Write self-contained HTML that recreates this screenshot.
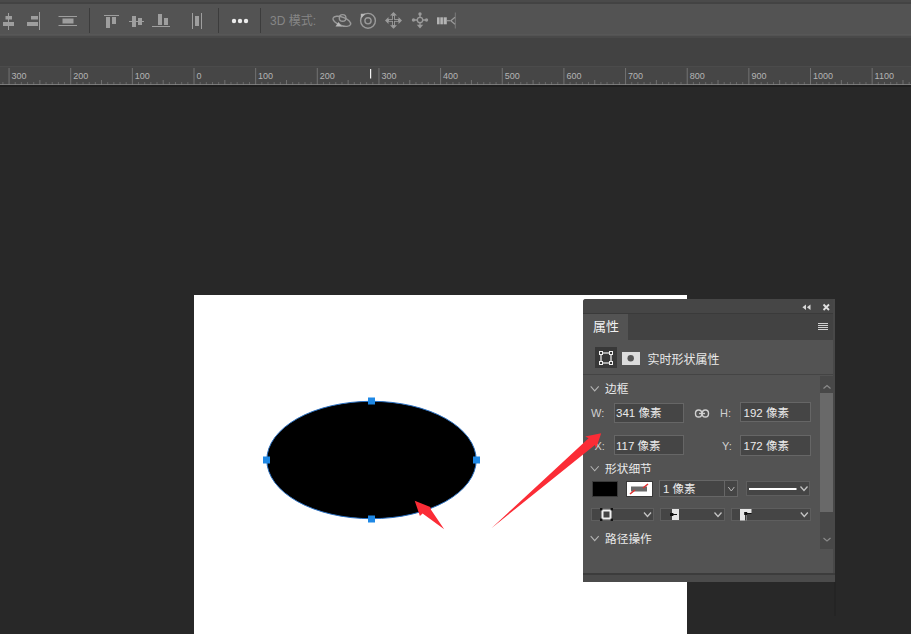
<!DOCTYPE html>
<html lang="zh-CN"><head><meta charset="utf-8"><title>Photoshop</title>
<style>
html,body{margin:0;padding:0;}
body{width:911px;height:634px;overflow:hidden;background:#282828;position:relative;font-family:"Liberation Sans","Noto Sans CJK SC",sans-serif;color:#eaeaea;font-size:12px;}
div,span{position:absolute;box-sizing:border-box;white-space:nowrap;}
.t{font-weight:400;line-height:14px;height:14px;}
.v{font-size:11.5px;}
.inp{background:#454545;border:1px solid #666;}
.dd{background:#454545;border:1px solid #5e5e5e;}
.rl{font-size:9px;line-height:10px;color:#b4b4b4;top:71px;}
svg{position:absolute;left:0;top:0;}
</style></head><body>

<div style="left:0;top:0;width:911px;height:2px;background:#4a4a4a"></div>
<div style="left:0;top:2px;width:911px;height:2px;background:#434343"></div>
<div style="left:0;top:4px;width:911px;height:32px;background:#535353"></div>
<div style="left:0;top:34px;width:911px;height:1px;background:#575757"></div>
<div style="left:0;top:36px;width:911px;height:2px;background:#494949"></div>
<div style="left:0;top:38px;width:911px;height:28px;background:#424242"></div>
<div style="left:0;top:66px;width:911px;height:1px;background:#4b4b4b"></div>
<div style="left:0;top:67px;width:911px;height:18px;background:#464646"></div>
<div style="left:0;top:85px;width:911px;height:2px;background:#1f1f1f"></div>
<span class="rl" style="left:11.6px">300</span>
<span class="rl" style="left:73.2px">200</span>
<span class="rl" style="left:134.8px">100</span>
<span class="rl" style="left:196.5px">0</span>
<span class="rl" style="left:258.1px">100</span>
<span class="rl" style="left:319.8px">200</span>
<span class="rl" style="left:381.4px">300</span>
<span class="rl" style="left:443.1px">400</span>
<span class="rl" style="left:504.8px">500</span>
<span class="rl" style="left:566.4px">600</span>
<span class="rl" style="left:628.0px">700</span>
<span class="rl" style="left:689.7px">800</span>
<span class="rl" style="left:751.4px">900</span>
<span class="rl" style="left:813.0px">1000</span>
<span class="rl" style="left:874.6px">1100</span>
<span class="t" style="left:270px;top:14px;color:#868686;font-size:12px">3D 模式:</span>
<div style="left:194px;top:295px;width:493px;height:339px;background:#ffffff"></div>
<div style="left:583px;top:299px;width:252px;height:283px;background:#535353;border-radius:3px 3px 0 0"></div>
<div style="left:583px;top:299px;width:252px;height:15px;background:#464646;border-radius:3px 3px 0 0"></div>
<div style="left:583px;top:314px;width:252px;height:26px;background:#424242"></div>
<div style="left:583px;top:313px;width:252px;height:1px;background:#3a3a3a"></div>
<div style="left:583px;top:314px;width:45px;height:26px;background:#535353"></div>
<span class="t" style="left:593px;top:320px;font-size:13px;color:#f0f0f0;font-weight:400">属性</span>
<div style="left:595px;top:347px;width:22px;height:21px;background:#383838"></div>
<div style="left:622px;top:352px;width:18px;height:13px;background:#dcdcdc"></div>
<span class="t" style="left:647.5px;top:352.5px;font-size:12px">实时形状属性</span>
<div style="left:583px;top:374px;width:250px;height:1px;background:#444"></div>
<div style="left:819.5px;top:376px;width:13px;height:172.5px;background:#484848"></div>
<div style="left:820px;top:393px;width:13px;height:119px;background:#696969"></div>
<div style="left:833px;top:299px;width:2px;height:283px;background:#484848"></div>
<span class="t" style="left:605px;top:382px;font-size:11.7px">边框</span>
<span class="t" style="left:591px;top:406px;font-size:11px;font-weight:400;color:#d0d0d0">W:</span>
<div class="inp" style="left:613.5px;top:402.5px;width:70px;height:20px"></div>
<span class="t v" style="left:616px;top:406px">341 像素</span>
<span class="t" style="left:720px;top:406px;font-size:11px;font-weight:400;color:#d0d0d0">H:</span>
<div class="inp" style="left:740px;top:402px;width:71px;height:20px"></div>
<span class="t v" style="left:743.5px;top:406px">192 像素</span>
<span class="t" style="left:594.5px;top:439px;font-size:11px;font-weight:400;color:#d0d0d0">X:</span>
<div class="inp" style="left:613.5px;top:435px;width:70px;height:20px"></div>
<span class="t v" style="left:616px;top:439px">117 像素</span>
<span class="t" style="left:722px;top:439px;font-size:11px;font-weight:400;color:#d0d0d0">Y:</span>
<div class="inp" style="left:740px;top:435px;width:71px;height:21px"></div>
<span class="t v" style="left:743.5px;top:439px">172 像素</span>
<span class="t" style="left:605px;top:461.5px;font-size:11.7px">形状细节</span>
<div style="left:592px;top:481px;width:26px;height:16px;background:#000;border:1px solid #3a3a3a"></div>
<div style="left:626px;top:481px;width:27px;height:16px;background:#fff;border:1px solid #3a3a3a"></div>
<div class="inp" style="left:659px;top:480px;width:65px;height:17px;border-right:none"></div>
<div class="inp" style="left:724px;top:480px;width:14px;height:17px"></div>
<span class="t v" style="left:663px;top:482px">1 像素</span>
<div class="dd" style="left:746px;top:481px;width:64px;height:15px"></div>
<div class="dd" style="left:591px;top:508px;width:63px;height:13px"></div>
<div class="dd" style="left:660px;top:508px;width:65px;height:13px"></div>
<div class="dd" style="left:731px;top:508px;width:80px;height:13px"></div>
<span class="t" style="left:605px;top:531.5px;font-size:11.7px">路径操作</span>
<div style="left:583px;top:573px;width:252px;height:2px;background:#3c3c3c"></div>
<div style="left:583px;top:575px;width:252px;height:7px;background:#4b4b4b"></div>
<div style="left:834px;top:582px;width:2px;height:34px;background:#242424"></div>
<svg width="911" height="634" viewBox="0 0 911 634">
<rect x="2.39" y="82" width="1" height="3" fill="#686868"/>
<rect x="8.55" y="68" width="1" height="17" fill="#727272"/>
<rect x="14.72" y="82" width="1" height="3" fill="#686868"/>
<rect x="20.88" y="82" width="1" height="3" fill="#686868"/>
<rect x="27.05" y="82" width="1" height="3" fill="#686868"/>
<rect x="33.21" y="82" width="1" height="3" fill="#686868"/>
<rect x="39.38" y="80" width="1" height="5" fill="#707070"/>
<rect x="45.54" y="82" width="1" height="3" fill="#686868"/>
<rect x="51.70" y="82" width="1" height="3" fill="#686868"/>
<rect x="57.87" y="82" width="1" height="3" fill="#686868"/>
<rect x="64.04" y="82" width="1" height="3" fill="#686868"/>
<rect x="70.20" y="68" width="1" height="17" fill="#727272"/>
<rect x="76.37" y="82" width="1" height="3" fill="#686868"/>
<rect x="82.53" y="82" width="1" height="3" fill="#686868"/>
<rect x="88.70" y="82" width="1" height="3" fill="#686868"/>
<rect x="94.86" y="82" width="1" height="3" fill="#686868"/>
<rect x="101.03" y="80" width="1" height="5" fill="#707070"/>
<rect x="107.19" y="82" width="1" height="3" fill="#686868"/>
<rect x="113.36" y="82" width="1" height="3" fill="#686868"/>
<rect x="119.52" y="82" width="1" height="3" fill="#686868"/>
<rect x="125.69" y="82" width="1" height="3" fill="#686868"/>
<rect x="131.85" y="68" width="1" height="17" fill="#727272"/>
<rect x="138.01" y="82" width="1" height="3" fill="#686868"/>
<rect x="144.18" y="82" width="1" height="3" fill="#686868"/>
<rect x="150.34" y="82" width="1" height="3" fill="#686868"/>
<rect x="156.51" y="82" width="1" height="3" fill="#686868"/>
<rect x="162.68" y="80" width="1" height="5" fill="#707070"/>
<rect x="168.84" y="82" width="1" height="3" fill="#686868"/>
<rect x="175.00" y="82" width="1" height="3" fill="#686868"/>
<rect x="181.17" y="82" width="1" height="3" fill="#686868"/>
<rect x="187.34" y="82" width="1" height="3" fill="#686868"/>
<rect x="193.50" y="68" width="1" height="17" fill="#727272"/>
<rect x="199.66" y="82" width="1" height="3" fill="#686868"/>
<rect x="205.83" y="82" width="1" height="3" fill="#686868"/>
<rect x="212.00" y="82" width="1" height="3" fill="#686868"/>
<rect x="218.16" y="82" width="1" height="3" fill="#686868"/>
<rect x="224.32" y="80" width="1" height="5" fill="#707070"/>
<rect x="230.49" y="82" width="1" height="3" fill="#686868"/>
<rect x="236.66" y="82" width="1" height="3" fill="#686868"/>
<rect x="242.82" y="82" width="1" height="3" fill="#686868"/>
<rect x="248.99" y="82" width="1" height="3" fill="#686868"/>
<rect x="255.15" y="68" width="1" height="17" fill="#727272"/>
<rect x="261.31" y="82" width="1" height="3" fill="#686868"/>
<rect x="267.48" y="82" width="1" height="3" fill="#686868"/>
<rect x="273.64" y="82" width="1" height="3" fill="#686868"/>
<rect x="279.81" y="82" width="1" height="3" fill="#686868"/>
<rect x="285.98" y="80" width="1" height="5" fill="#707070"/>
<rect x="292.14" y="82" width="1" height="3" fill="#686868"/>
<rect x="298.31" y="82" width="1" height="3" fill="#686868"/>
<rect x="304.47" y="82" width="1" height="3" fill="#686868"/>
<rect x="310.63" y="82" width="1" height="3" fill="#686868"/>
<rect x="316.80" y="68" width="1" height="17" fill="#727272"/>
<rect x="322.96" y="82" width="1" height="3" fill="#686868"/>
<rect x="329.13" y="82" width="1" height="3" fill="#686868"/>
<rect x="335.30" y="82" width="1" height="3" fill="#686868"/>
<rect x="341.46" y="82" width="1" height="3" fill="#686868"/>
<rect x="347.62" y="80" width="1" height="5" fill="#707070"/>
<rect x="353.79" y="82" width="1" height="3" fill="#686868"/>
<rect x="359.95" y="82" width="1" height="3" fill="#686868"/>
<rect x="366.12" y="82" width="1" height="3" fill="#686868"/>
<rect x="372.28" y="82" width="1" height="3" fill="#686868"/>
<rect x="378.45" y="68" width="1" height="17" fill="#727272"/>
<rect x="384.62" y="82" width="1" height="3" fill="#686868"/>
<rect x="390.78" y="82" width="1" height="3" fill="#686868"/>
<rect x="396.94" y="82" width="1" height="3" fill="#686868"/>
<rect x="403.11" y="82" width="1" height="3" fill="#686868"/>
<rect x="409.27" y="80" width="1" height="5" fill="#707070"/>
<rect x="415.44" y="82" width="1" height="3" fill="#686868"/>
<rect x="421.60" y="82" width="1" height="3" fill="#686868"/>
<rect x="427.77" y="82" width="1" height="3" fill="#686868"/>
<rect x="433.94" y="82" width="1" height="3" fill="#686868"/>
<rect x="440.10" y="68" width="1" height="17" fill="#727272"/>
<rect x="446.26" y="82" width="1" height="3" fill="#686868"/>
<rect x="452.43" y="82" width="1" height="3" fill="#686868"/>
<rect x="458.59" y="82" width="1" height="3" fill="#686868"/>
<rect x="464.76" y="82" width="1" height="3" fill="#686868"/>
<rect x="470.93" y="80" width="1" height="5" fill="#707070"/>
<rect x="477.09" y="82" width="1" height="3" fill="#686868"/>
<rect x="483.25" y="82" width="1" height="3" fill="#686868"/>
<rect x="489.42" y="82" width="1" height="3" fill="#686868"/>
<rect x="495.58" y="82" width="1" height="3" fill="#686868"/>
<rect x="501.75" y="68" width="1" height="17" fill="#727272"/>
<rect x="507.92" y="82" width="1" height="3" fill="#686868"/>
<rect x="514.08" y="82" width="1" height="3" fill="#686868"/>
<rect x="520.25" y="82" width="1" height="3" fill="#686868"/>
<rect x="526.41" y="82" width="1" height="3" fill="#686868"/>
<rect x="532.58" y="80" width="1" height="5" fill="#707070"/>
<rect x="538.74" y="82" width="1" height="3" fill="#686868"/>
<rect x="544.90" y="82" width="1" height="3" fill="#686868"/>
<rect x="551.07" y="82" width="1" height="3" fill="#686868"/>
<rect x="557.24" y="82" width="1" height="3" fill="#686868"/>
<rect x="563.40" y="68" width="1" height="17" fill="#727272"/>
<rect x="569.57" y="82" width="1" height="3" fill="#686868"/>
<rect x="575.73" y="82" width="1" height="3" fill="#686868"/>
<rect x="581.89" y="82" width="1" height="3" fill="#686868"/>
<rect x="588.06" y="82" width="1" height="3" fill="#686868"/>
<rect x="594.23" y="80" width="1" height="5" fill="#707070"/>
<rect x="600.39" y="82" width="1" height="3" fill="#686868"/>
<rect x="606.56" y="82" width="1" height="3" fill="#686868"/>
<rect x="612.72" y="82" width="1" height="3" fill="#686868"/>
<rect x="618.88" y="82" width="1" height="3" fill="#686868"/>
<rect x="625.05" y="68" width="1" height="17" fill="#727272"/>
<rect x="631.21" y="82" width="1" height="3" fill="#686868"/>
<rect x="637.38" y="82" width="1" height="3" fill="#686868"/>
<rect x="643.54" y="82" width="1" height="3" fill="#686868"/>
<rect x="649.71" y="82" width="1" height="3" fill="#686868"/>
<rect x="655.88" y="80" width="1" height="5" fill="#707070"/>
<rect x="662.04" y="82" width="1" height="3" fill="#686868"/>
<rect x="668.21" y="82" width="1" height="3" fill="#686868"/>
<rect x="674.37" y="82" width="1" height="3" fill="#686868"/>
<rect x="680.53" y="82" width="1" height="3" fill="#686868"/>
<rect x="686.70" y="68" width="1" height="17" fill="#727272"/>
<rect x="692.87" y="82" width="1" height="3" fill="#686868"/>
<rect x="699.03" y="82" width="1" height="3" fill="#686868"/>
<rect x="705.19" y="82" width="1" height="3" fill="#686868"/>
<rect x="711.36" y="82" width="1" height="3" fill="#686868"/>
<rect x="717.52" y="80" width="1" height="5" fill="#707070"/>
<rect x="723.69" y="82" width="1" height="3" fill="#686868"/>
<rect x="729.86" y="82" width="1" height="3" fill="#686868"/>
<rect x="736.02" y="82" width="1" height="3" fill="#686868"/>
<rect x="742.18" y="82" width="1" height="3" fill="#686868"/>
<rect x="748.35" y="68" width="1" height="17" fill="#727272"/>
<rect x="754.51" y="82" width="1" height="3" fill="#686868"/>
<rect x="760.68" y="82" width="1" height="3" fill="#686868"/>
<rect x="766.85" y="82" width="1" height="3" fill="#686868"/>
<rect x="773.01" y="82" width="1" height="3" fill="#686868"/>
<rect x="779.17" y="80" width="1" height="5" fill="#707070"/>
<rect x="785.34" y="82" width="1" height="3" fill="#686868"/>
<rect x="791.50" y="82" width="1" height="3" fill="#686868"/>
<rect x="797.67" y="82" width="1" height="3" fill="#686868"/>
<rect x="803.83" y="82" width="1" height="3" fill="#686868"/>
<rect x="810.00" y="68" width="1" height="17" fill="#727272"/>
<rect x="816.16" y="82" width="1" height="3" fill="#686868"/>
<rect x="822.33" y="82" width="1" height="3" fill="#686868"/>
<rect x="828.50" y="82" width="1" height="3" fill="#686868"/>
<rect x="834.66" y="82" width="1" height="3" fill="#686868"/>
<rect x="840.83" y="80" width="1" height="5" fill="#707070"/>
<rect x="846.99" y="82" width="1" height="3" fill="#686868"/>
<rect x="853.15" y="82" width="1" height="3" fill="#686868"/>
<rect x="859.32" y="82" width="1" height="3" fill="#686868"/>
<rect x="865.48" y="82" width="1" height="3" fill="#686868"/>
<rect x="871.65" y="68" width="1" height="17" fill="#727272"/>
<rect x="877.81" y="82" width="1" height="3" fill="#686868"/>
<rect x="883.98" y="82" width="1" height="3" fill="#686868"/>
<rect x="890.14" y="82" width="1" height="3" fill="#686868"/>
<rect x="896.31" y="82" width="1" height="3" fill="#686868"/>
<rect x="902.48" y="80" width="1" height="5" fill="#707070"/>
<rect x="908.64" y="82" width="1" height="3" fill="#686868"/>
<rect x="0" y="84" width="911" height="1" fill="#868686" opacity="0.8"/>
<rect x="370" y="69" width="1.2" height="9.5" fill="#f2f2f2"/>
<rect x="89.0" y="8" width="1" height="25" fill="#3c3c3c"/>
<rect x="218.0" y="8" width="1" height="25" fill="#3c3c3c"/>
<rect x="260.0" y="8" width="1" height="25" fill="#3c3c3c"/>
<g fill="#9e9e9e"><rect x="8" y="13" width="1" height="17"/><rect x="5.5" y="16" width="6.5" height="3.5"/><rect x="3" y="22" width="11" height="4"/></g>
<g fill="#9e9e9e"><rect x="39" y="12" width="1" height="18"/><rect x="31" y="16" width="7" height="3.5"/><rect x="27" y="22" width="11" height="4"/></g>
<g fill="#9e9e9e"><rect x="58.5" y="16" width="18.5" height="1"/><rect x="58.5" y="25" width="18.5" height="1"/><rect x="62.5" y="18.5" width="11" height="5"/></g>
<g fill="#9e9e9e"><rect x="104" y="15" width="15" height="1"/><rect x="106" y="17" width="4" height="11"/><rect x="112" y="17" width="4" height="7"/></g>
<g fill="#9e9e9e"><rect x="129" y="21" width="15" height="1"/><rect x="132" y="16" width="4" height="11"/><rect x="138" y="18" width="4" height="7"/></g>
<g fill="#9e9e9e"><rect x="152" y="26" width="18" height="1"/><rect x="158" y="14" width="4" height="11"/><rect x="164" y="18" width="4" height="7"/></g>
<g fill="#9e9e9e"><rect x="192" y="13" width="1" height="16"/><rect x="201" y="13" width="1" height="16"/><rect x="195" y="16" width="4" height="10"/></g>
<circle cx="234" cy="21" r="2.2" fill="#ececec"/>
<circle cx="240" cy="21" r="2.2" fill="#ececec"/>
<circle cx="246" cy="21" r="2.2" fill="#ececec"/>
<g fill="none" stroke="#9a9a9a" stroke-width="1.4"><ellipse cx="341.8" cy="21.3" rx="9.3" ry="4.2" transform="rotate(20 341.8 21.3)"/><circle cx="342.6" cy="17.9" r="3.3"/></g><path d="M335.5 26.5 l6.5 0 l-3.5 -4.5z" fill="#b8b8b8"/>
<g fill="none" stroke="#9a9a9a" stroke-width="1.4"><circle cx="368" cy="20.8" r="7.4"/><circle cx="368" cy="20.8" r="3.1"/></g><path d="M360.8 13.8 l4.6 0 l-4.6 4.6z" fill="#b8b8b8"/>
<g fill="#9a9a9a"><rect x="392.1" y="14" width="2.8" height="13"/><rect x="387" y="19" width="13" height="2.8"/><path d="M390 15.5 l3.5 -3.5 l3.5 3.5z M390 25.3 l3.5 3.5 l3.5 -3.5z M388.5 16.9 l-3.5 3.5 l3.5 3.5z M398.5 16.9 l3.5 3.5 l-3.5 3.5z"/></g><path d="M393.5 16 v9 M389 20.4 h9" stroke="#3a3a3a" stroke-width="0.8" fill="none"/>
<g fill="none" stroke="#9a9a9a" stroke-width="1.3"><circle cx="420" cy="20" r="2.7"/><path d="M420 14v3.3 M420 22.7v3 M414 20h3.3 M422.7 20h3.3"/></g><g fill="#9a9a9a"><circle cx="420" cy="14" r="1.7"/><circle cx="413.5" cy="20" r="1.7"/><circle cx="426.5" cy="20" r="1.7"/><path d="M416.8 24.8 h6.4 l-3.2 3.7z"/></g>
<g fill="#b4b4b4"><rect x="437" y="17.3" width="2.6" height="7"/><rect x="440.3" y="17.3" width="2.6" height="7"/><rect x="443.6" y="17.3" width="3.2" height="7"/></g><g fill="none" stroke="#9a9a9a" stroke-width="1.2"><path d="M447 20.7 h3"/><path d="M455.3 12.5 v16" stroke-width="0.8" opacity="0.7"/><path d="M455 17.2 l-4.2 3.5 l4.2 3.5"/></g>
<ellipse cx="371.5" cy="460" rx="104.7" ry="58.7" fill="#000" stroke="#2a6fc0" stroke-width="1"/>
<rect x="368.0" y="397.5" width="7" height="7" fill="#1e88e5"/>
<rect x="368.0" y="515.5" width="7" height="7" fill="#1e88e5"/>
<rect x="263.0" y="456.5" width="7" height="7" fill="#1e88e5"/>
<rect x="473.0" y="456.5" width="7" height="7" fill="#1e88e5"/>
<path d="M414.7 500.7 L430.3 506.9 L431 509.8 L444.2 529.2 L422.6 513.6 L419.9 516 Z" fill="#fb2c36"/>
<path d="M491.4 528.2 L588.6 438.3 L585.2 436.6 L601.2 433.3 L596 448.5 L594.9 445 Z" fill="#fb2c36"/>
<g fill="#d8d8d8"><path d="M806 304.5 v5.5 l-3.6 -2.75z M810.5 304.5 v5.5 l-3.6 -2.75z"/></g>
<path d="M823.5 304.5 l5.5 5.5 M829 304.5 l-5.5 5.5" stroke="#e0e0e0" stroke-width="1.8" fill="none"/>
<rect x="818" y="323" width="10" height="1" fill="#d0d0d0"/>
<rect x="818" y="325" width="10" height="1" fill="#d0d0d0"/>
<rect x="818" y="327" width="10" height="1" fill="#d0d0d0"/>
<rect x="818" y="329" width="10" height="1" fill="#d0d0d0"/>
<g fill="none" stroke="#f0f0f0" stroke-width="1.2"><rect x="601" y="353" width="10" height="10"/></g><g fill="#383838" stroke="#f0f0f0" stroke-width="1"><rect x="599.5" y="351.5" width="3" height="3"/><rect x="609.5" y="351.5" width="3" height="3"/><rect x="599.5" y="361.5" width="3" height="3"/><rect x="609.5" y="361.5" width="3" height="3"/></g>
<circle cx="630.7" cy="358.3" r="3.2" fill="#555"/>
<path d="M590.7 386.45 L594.7 390.95 L598.7 386.45" fill="none" stroke="#b4b4b4" stroke-width="1.1"/>
<path d="M590.7 466.25 L594.7 470.75 L598.7 466.25" fill="none" stroke="#b4b4b4" stroke-width="1.1"/>
<path d="M590.7 536.05 L594.7 540.55 L598.7 536.05" fill="none" stroke="#b4b4b4" stroke-width="1.1"/>
<path d="M728.3 487.0 L731.3 491.0 L734.3 487.0" fill="none" stroke="#b8b8b8" stroke-width="1"/>
<path d="M800.5 486.5 L804 490.5 L807.5 486.5" fill="none" stroke="#c4c4c4" stroke-width="1.3"/>
<path d="M644.0 512.5 L647.5 516.5 L651.0 512.5" fill="none" stroke="#c4c4c4" stroke-width="1.3"/>
<path d="M714.5 512.5 L718 516.5 L721.5 512.5" fill="none" stroke="#c4c4c4" stroke-width="1.3"/>
<path d="M800.8 512.5 L804.3 516.5 L807.8 512.5" fill="none" stroke="#c4c4c4" stroke-width="1.3"/>
<path d="M823.5 388.5 L827 385.5 L830.5 388.5" fill="none" stroke="#8a8a8a" stroke-width="1.2"/>
<path d="M823.5 538 L827 541 L830.5 538" fill="none" stroke="#8a8a8a" stroke-width="1.2"/>
<g fill="none" stroke="#d0d0d0" stroke-width="1.4"><rect x="695.5" y="410" width="6.3" height="7" rx="3.3"/><rect x="702.2" y="410" width="6.3" height="7" rx="3.3"/><path d="M699 413.5 h6"/></g>
<rect x="631" y="486.5" width="16" height="5" fill="#6a6a6a"/><path d="M630 494 l5 -4 M643 488 l5 -4" stroke="#e03030" stroke-width="1.6"/>
<rect x="749" y="488" width="47.5" height="2" fill="#ffffff"/>
<g fill="none" stroke="#f0f0f0" stroke-width="2"><rect x="602.5" y="510.5" width="8" height="8"/></g><g fill="#111"><rect x="600" y="508" width="2.4" height="2.4"/><rect x="610.6" y="508" width="2.4" height="2.4"/><rect x="600" y="518.6" width="2.4" height="2.4"/><rect x="610.6" y="518.6" width="2.4" height="2.4"/></g>
<g fill="#e6e6e6"><rect x="672" y="509" width="7" height="4.5"/><rect x="672" y="515.5" width="7" height="4.5"/><rect x="674" y="513" width="5" height="3"/></g><rect x="670" y="513" width="3" height="3" fill="#111"/><rect x="672" y="514" width="5" height="1" fill="#111"/>
<path d="M740 509 h11.5 v4.5 h-5 v7 h-6.5z" fill="#e6e6e6"/><rect x="744.2" y="512" width="3" height="3" fill="#111"/><path d="M745.7 513.5 v7 M745.7 513.5 h6" stroke="#111" stroke-width="1" fill="none"/>
</svg>
</body></html>
